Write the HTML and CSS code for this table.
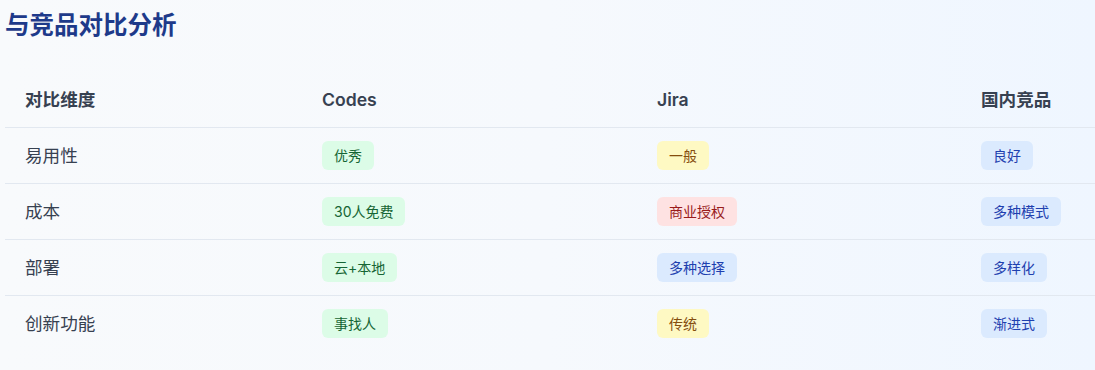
FILE: index.html
```html
<!DOCTYPE html>
<html lang="zh-CN">
<head>
<meta charset="utf-8">
<title>与竞品对比分析</title>
<link rel="stylesheet" href="styles.css">
</head>
<body>
<div class="page">
  <h1 class="title">与竞品对比分析</h1>
  <table class="compare">
    <colgroup>
      <col class="c1"><col class="c2"><col class="c3"><col class="c4">
    </colgroup>
    <thead>
      <tr><th>对比维度</th><th>Codes</th><th>Jira</th><th>国内竞品</th></tr>
    </thead>
    <tbody>
      <tr>
        <td>易用性</td>
        <td><span class="pill green">优秀</span></td>
        <td><span class="pill yellow">一般</span></td>
        <td><span class="pill blue">良好</span></td>
      </tr>
      <tr>
        <td>成本</td>
        <td><span class="pill green">30人免费</span></td>
        <td><span class="pill red">商业授权</span></td>
        <td><span class="pill blue">多种模式</span></td>
      </tr>
      <tr>
        <td>部署</td>
        <td><span class="pill green">云+本地</span></td>
        <td><span class="pill blue">多种选择</span></td>
        <td><span class="pill blue">多样化</span></td>
      </tr>
      <tr class="last">
        <td>创新功能</td>
        <td><span class="pill green">事找人</span></td>
        <td><span class="pill yellow">传统</span></td>
        <td><span class="pill blue">渐进式</span></td>
      </tr>
    </tbody>
  </table>
</div>
</body>
</html>
```
FILE: styles.css
```css
html, body {
  margin: 0;
  padding: 0;
}
body {
  width: 1095px;
  height: 370px;
  overflow: hidden;
  background: linear-gradient(90deg, #f8fafc 0%, #f6f9fd 50%, #eff6ff 100%);
  font-family: Inter, "Noto Sans CJK SC", sans-serif;
  color: #374151;
}
.page {
  padding: 9px 0 0 5px;
}
.title {
  margin: 0;
  font-size: 24.5px;
  line-height: 32px;
  font-weight: 700;
  color: #1e3a8a;
}
.compare {
  margin-top: 31px;
  border-collapse: collapse;
  table-layout: fixed;
  width: 1110px;
}
.c1 { width: 297px; }
.c2 { width: 335px; }
.c3 { width: 324px; }
.c4 { width: 154px; }
.compare th,
.compare td {
  text-align: left;
  vertical-align: middle;
  padding: 0 20px;
  height: 55px;
  border-bottom: 1px solid #e2e8f0;
  font-size: 17.6px;
  line-height: 26px;
}
.compare th {
  font-weight: 600;
  color: #374151;
}
.compare td {
  color: #374151;
}
.compare tr.last td {
  border-bottom: none;
}
.pill {
  display: inline-block;
  padding: 4px 12px;
  border-radius: 6px;
  font-size: 14px;
  line-height: 21px;
  vertical-align: middle;
}
.green { background: #dcfce7; color: #166534; }
.yellow { background: #fef9c3; color: #854d0e; }
.red { background: #fee2e2; color: #991b1b; }
.blue { background: #dbeafe; color: #1e40af; }
```
